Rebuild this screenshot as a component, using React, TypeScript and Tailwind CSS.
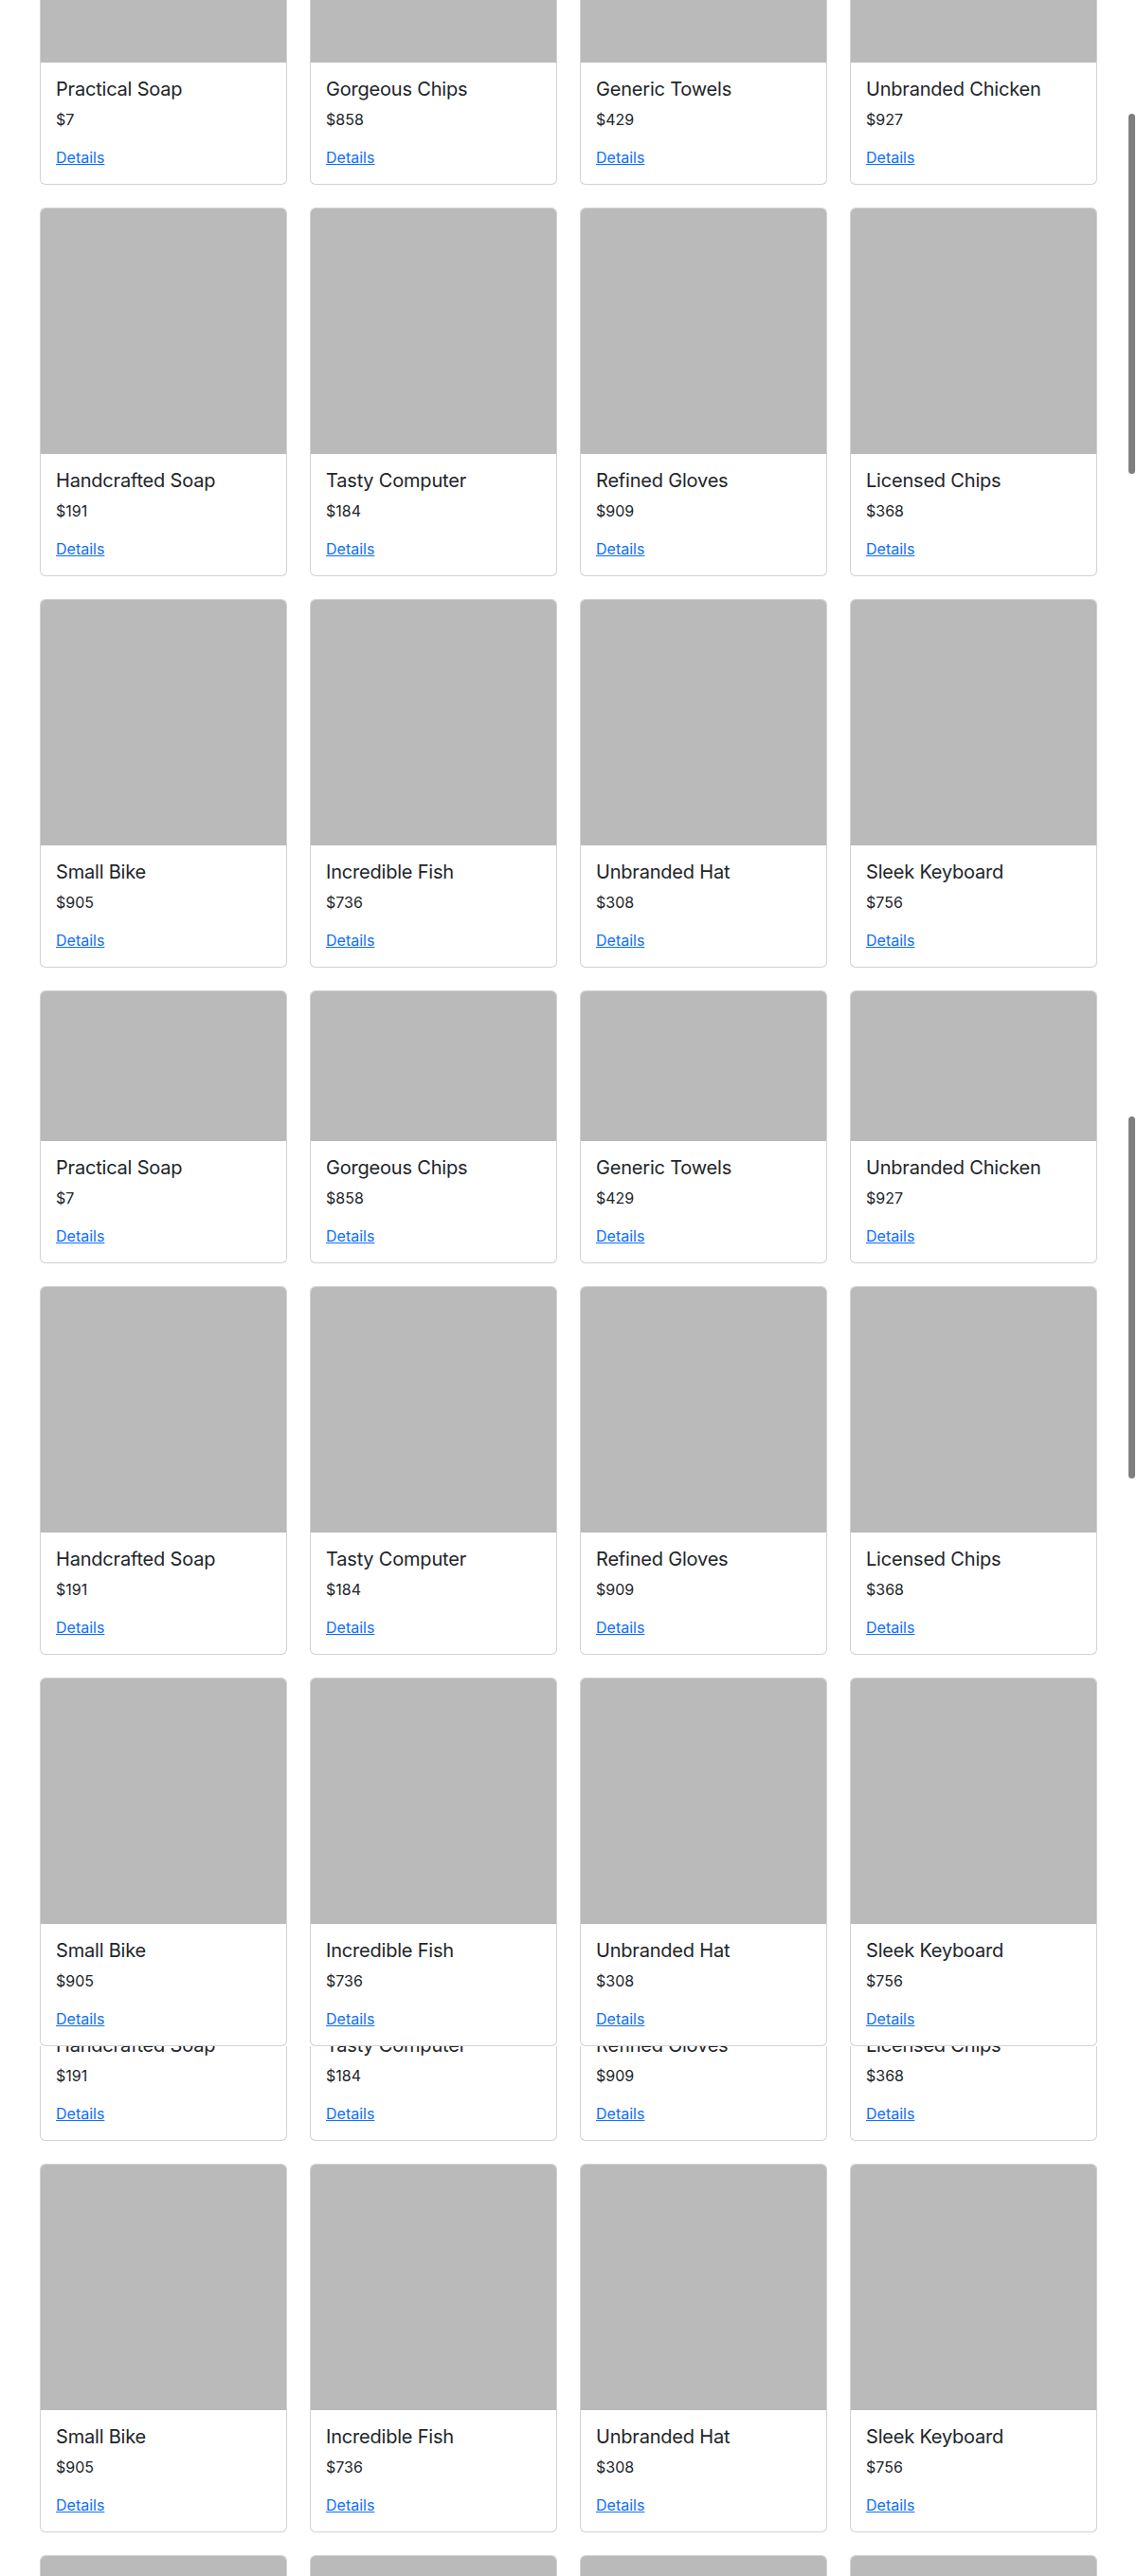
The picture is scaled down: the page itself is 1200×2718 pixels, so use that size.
type Product = { name: string; price: string };

const rowOne: Product[] = [
  { name: 'Practical Soap', price: '$7' },
  { name: 'Gorgeous Chips', price: '$858' },
  { name: 'Generic Towels', price: '$429' },
  { name: 'Unbranded Chicken', price: '$927' },
];

const rowTwo: Product[] = [
  { name: 'Handcrafted Soap', price: '$191' },
  { name: 'Tasty Computer', price: '$184' },
  { name: 'Refined Gloves', price: '$909' },
  { name: 'Licensed Chips', price: '$368' },
];

const rowThree: Product[] = [
  { name: 'Small Bike', price: '$905' },
  { name: 'Incredible Fish', price: '$736' },
  { name: 'Unbranded Hat', price: '$308' },
  { name: 'Sleek Keyboard', price: '$756' },
];

function ProductCard({ product, short }: { product: Product; short?: boolean }) {
  return (
    <div className="flex flex-col overflow-hidden rounded-[6px] border border-[rgba(0,0,0,0.175)] bg-white">
      <div className={short ? 'h-[158px] bg-[#bababa]' : 'h-[259px] bg-[#bababa]'}></div>
      <div className="p-4">
        <h5 className="mb-2 text-[20px] font-normal leading-[1.2] tracking-[-0.2px] text-[#212529]">{product.name}</h5>
        <p className="mb-4 text-base leading-6 text-[#212529]">{product.price}</p>
        <a href="#" className="text-base leading-6 text-[#0d6efd] underline">
          Details
        </a>
      </div>
    </div>
  );
}

function ProductRow({ items, short }: { items: Product[]; short?: boolean }) {
  return (
    <div className="grid grid-cols-4 gap-6">
      {items.map((p) => (
        <ProductCard key={p.name} product={p} short={short} />
      ))}
    </div>
  );
}

export default function App() {
  return (
    <div className="relative h-[2718px] overflow-hidden bg-white font-['Inter','Liberation_Sans',sans-serif] text-[#212529]">
      <div className="mx-auto w-[1140px] px-3">
        {/* first pass through the list */}
        <div className="-mt-[194px] flex flex-col gap-6">
          <ProductRow items={rowOne} />
          <ProductRow items={rowTwo} />
          <ProductRow items={rowThree} />
          <ProductRow items={rowOne} short />
          <ProductRow items={rowTwo} />
          <ProductRow items={rowThree} />
        </div>

        {/* row that peeks out from under the previous one */}
        <div className="h-[100px] overflow-hidden">
          <div className="-mt-[289px]">
            <ProductRow items={rowTwo} />
          </div>
        </div>

        <div className="flex flex-col gap-6 pt-6">
          <ProductRow items={rowThree} />
          <ProductRow items={rowOne} />
        </div>
      </div>

      {/* overlay scrollbar thumbs */}
      <div className="absolute left-[1191px] top-[120px] h-[380px] w-[7px] rounded-full bg-[#7f7f7f]"></div>
      <div className="absolute left-[1191px] top-[1178px] h-[382px] w-[7px] rounded-full bg-[#7f7f7f]"></div>
    </div>
  );
}
